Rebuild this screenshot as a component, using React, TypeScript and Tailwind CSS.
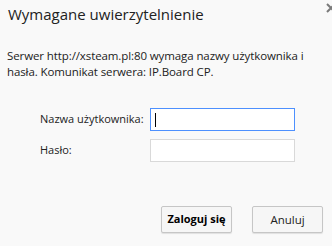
import React from 'react';

const font = { fontFamily: '"Open Sans", "Noto Sans", sans-serif' };

export default function App() {
  return (
    <div
      style={font}
      className="relative w-[332px] h-[246px] overflow-hidden bg-[#f9f9f9] text-[#222]"
    >
      {/* close icon, cut at right edge */}
      <svg className="absolute left-[326px] top-[3px]" width="10" height="10" viewBox="0 0 10 10">
        <path d="M1 1 L9 9 M9 1 L1 9" stroke="#7a7a7a" strokeWidth="2" />
      </svg>

      <div className="pl-[8px] pt-[4px] text-[15px] leading-[20px] text-[#222]">
        Wymagane uwierzytelnienie
      </div>

      <p className="pl-[7px] pt-[24px] text-[11.5px] leading-[16px] text-[#222] whitespace-nowrap tracking-[-0.1px]">
        Serwer http://xsteam.pl:80 wymaga nazwy użytkownika i
        <br />
        hasła. Komunikat serwera: IP.Board CP.
      </p>

      <div className="mt-[28px] grid grid-cols-[110px_145px] gap-y-[8px] pl-[40px] items-center text-[11px]">
        <label className="whitespace-nowrap">Nazwa użytkownika:</label>
        <div className="h-[23px] bg-white border border-[#4d90fe] flex items-center pl-[4px]">
          <span className="w-px h-[14px] bg-black" />
        </div>
        <label>Hasło:</label>
        <div className="h-[23px] bg-white border border-[#d9d9d9]" />
      </div>

      <div className="flex justify-end gap-[20px] pr-[9px] mt-[44px]">
        <button className="w-[71px] h-[27px] rounded-[2px] border border-[#c6c6c6] bg-[#f6f6f6] shadow-[0_1px_1px_rgba(0,0,0,0.1)] text-[11px] font-bold text-black">
          Zaloguj się
        </button>
        <button className="w-[71px] h-[27px] rounded-[2px] border border-[#c6c6c6] bg-[#f6f6f6] shadow-[0_1px_1px_rgba(0,0,0,0.1)] text-[11.5px] text-[#222]">
          Anuluj
        </button>
      </div>
    </div>
  );
}
